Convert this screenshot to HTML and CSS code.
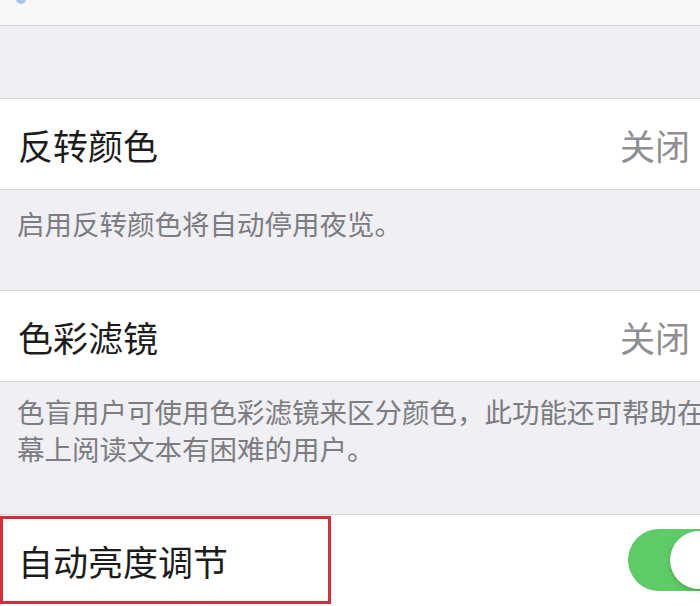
FILE: index.html
```html
<!DOCTYPE html>
<html>
<head>
    <title>辅助功能</title>
    <link rel="stylesheet" href="styles.css">
</head>
<body>

<div class="top-cell">
    <span class="top-dot"></span>
</div>
<div class="group-gap"></div>

<div class="cell">
    <span class="cell-title">反转颜色</span>
    <span class="cell-value">关闭</span>
</div>
<div class="group-footer">启用反转颜色将自动停用夜览。</div>

<div class="cell">
    <span class="cell-title">色彩滤镜</span>
    <span class="cell-value">关闭</span>
</div>
<div class="group-footer tall">色盲用户可使用色彩滤镜来区分颜色，此功能还可帮助在<br>幕上阅读文本有困难的用户。</div>

<div class="cell cell-marked">
    <div class="marked-box">
        <span class="cell-title">自动亮度调节</span>
    </div>
    <div class="switch on">
        <span class="switch-knob"></span>
    </div>
</div>

</body>
</html>
```

FILE: styles.css
```css
html, body {
    margin: 0;
    height: 606px;
    overflow: hidden;
}
body {
    font-family: "Noto Sans CJK SC", "Noto Sans", sans-serif;
    background-color: #efeff4;
    width: 700px;
}
.top-cell {
    height: 25px;
    background-color: #f8f8f9;
    border-bottom: 1px solid #d3d3d8;
    position: relative;
}
.top-dot {
    position: absolute;
    left: 16px;
    top: -6px;
    width: 10px;
    height: 10px;
    border-radius: 50%;
    background-color: #a9c4e8;
}
.group-gap {
    height: 72px;
}
.cell {
    box-sizing: border-box;
    height: 92px;
    background-color: #fff;
    border-top: 1px solid #d6d6da;
    border-bottom: 1px solid #d6d6da;
    display: flex;
    align-items: center;
    justify-content: space-between;
    padding: 0 10px 0 18px;
}
.cell-title {
    font-size: 35px;
    color: #1c1c1c;
    line-height: 1;
}
.cell-value {
    font-size: 35px;
    color: #8e8e93;
    line-height: 1;
}
.group-footer {
    box-sizing: border-box;
    height: 100px;
    padding: 15px 0 0 17px;
    font-size: 27.5px;
    line-height: 37px;
    color: #7c7c81;
    white-space: nowrap;
    overflow: hidden;
}
.group-footer.tall {
    height: 132px;
    padding-top: 11px;
}
.cell-marked {
    height: 100px;
    padding-left: 0;
    padding-right: 0;
    align-items: flex-start;
    overflow: hidden;
}
.marked-box {
    box-sizing: border-box;
    width: 331px;
    height: 88px;
    margin-top: 1px;
    border: 3px solid #d1303b;
    display: flex;
    align-items: center;
    padding-left: 15px;
}
.switch {
    width: 102px;
    height: 62px;
    border-radius: 31px;
    margin-top: 14px;
    margin-right: -30px;
    background-color: #e5e5ea;
    position: relative;
}
.switch.on {
    background-color: #5ecb66;
}
.switch-knob {
    position: absolute;
    right: 2px;
    top: 2px;
    width: 58px;
    height: 58px;
    border-radius: 50%;
    background-color: #fff;
    box-shadow: 0 2px 4px rgba(0, 0, 0, 0.2);
}
```
